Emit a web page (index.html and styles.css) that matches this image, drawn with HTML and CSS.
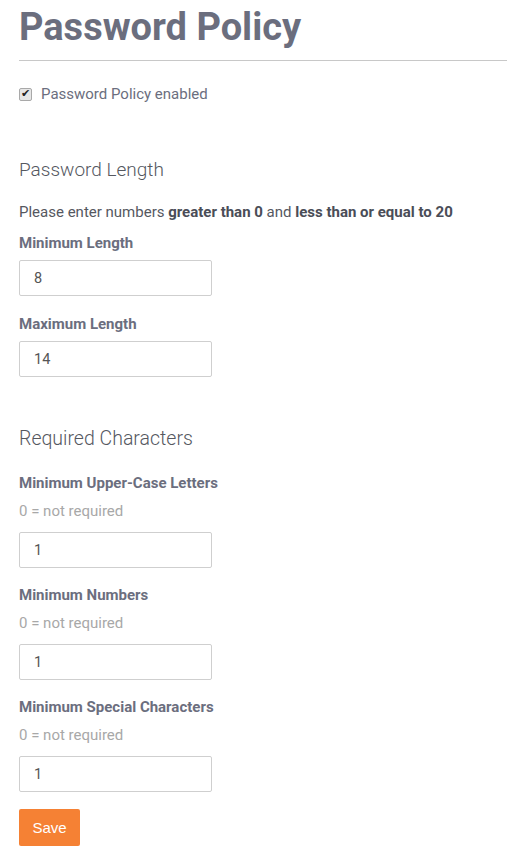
FILE: index.html
```html
<!DOCTYPE html>
<html lang="en">
<head>
  <meta charset="UTF-8">
  <title>Password Policy</title>
  <link rel="stylesheet" href="styles.css">
</head>
<body>
  <div class="page">
    <h1>Password Policy</h1>

    <label class="check-row">
      <input type="checkbox" checked>
      Password Policy enabled
    </label>

    <h2>Password Length</h2>
    <p class="hint">Please enter numbers <strong>greater than 0</strong> and <strong>less than or equal to 20</strong></p>

    <div class="field">
      <label>Minimum Length</label>
      <input type="text" value="8">
    </div>
    <div class="field">
      <label>Maximum Length</label>
      <input type="text" value="14">
    </div>

    <h2 class="section">Required Characters</h2>

    <div class="field">
      <label>Minimum Upper-Case Letters</label>
      <div class="help">0 = not required</div>
      <input type="text" value="1">
    </div>
    <div class="field">
      <label>Minimum Numbers</label>
      <div class="help">0 = not required</div>
      <input type="text" value="1">
    </div>
    <div class="field">
      <label>Minimum Special Characters</label>
      <div class="help">0 = not required</div>
      <input type="text" value="1">
    </div>

    <button class="save-button">Save</button>
  </div>
</body>
</html>
```

FILE: styles.css
```css
* {
  margin: 0;
  padding: 0;
  box-sizing: border-box;
}

body {
  font-family: Roboto, 'Liberation Sans', sans-serif;
  color: #6b6e7e;
  background: #fff;
}

.page {
  padding: 4px 0 0 19px;
}

h1 {
  font-size: 38px;
  font-weight: 700;
  color: #6b6e7e;
  line-height: 46px;
  padding-bottom: 10px;
  border-bottom: 1px solid #c8c8c8;
  margin-bottom: 23px;
}

.check-row {
  display: flex;
  align-items: center;
  gap: 9px;
  font-size: 15px;
  color: #6b6e7e;
  height: 20px;
}

.check-row input {
  appearance: none;
  width: 13px;
  height: 13px;
  border: 1px solid #a9a9a9;
  border-radius: 2px;
  background: #e6e6e6;
  position: relative;
}

.check-row input:checked::after {
  content: '\2714';
  position: absolute;
  left: 1px;
  top: -2px;
  font-size: 11px;
  color: #222;
}

h2 {
  font-size: 19px;
  font-weight: 300;
  color: #55585f;
  margin-top: 52px;
  line-height: 28px;
}

h2.section {
  font-size: 19.5px;
  margin-top: 48px;
}

.hint {
  font-size: 15px;
  color: #55585f;
  margin-top: 19px;
  line-height: 18px;
}

.hint strong {
  color: #4a4d57;
}

.field {
  margin-top: 19px;
  width: 193px;
}

.hint + .field {
  margin-top: 13px;
}

.section ~ .field {
  margin-top: 18px;
}

h2.section + .field {
  margin-top: 21px;
}

.field label {
  display: block;
  font-size: 15px;
  font-weight: 700;
  color: #6b6e7e;
  line-height: 18px;
  margin-bottom: 8px;
  white-space: nowrap;
}

.help {
  font-size: 15px;
  color: #a8a8a8;
  line-height: 18px;
  margin-top: 10px;
  margin-bottom: 12px;
}

.field input {
  display: block;
  width: 193px;
  height: 36px;
  border: 1px solid #cfcfcf;
  border-radius: 2px;
  padding: 0 14px;
  font-family: inherit;
  font-size: 14.5px;
  color: #555;
}

.save-button {
  margin-top: 17px;
  background: #f58134;
  color: #fff;
  border: none;
  border-radius: 2px;
  width: 61px;
  height: 37px;
  font-family: 'Liberation Sans', sans-serif;
  font-size: 15px;
}
```
